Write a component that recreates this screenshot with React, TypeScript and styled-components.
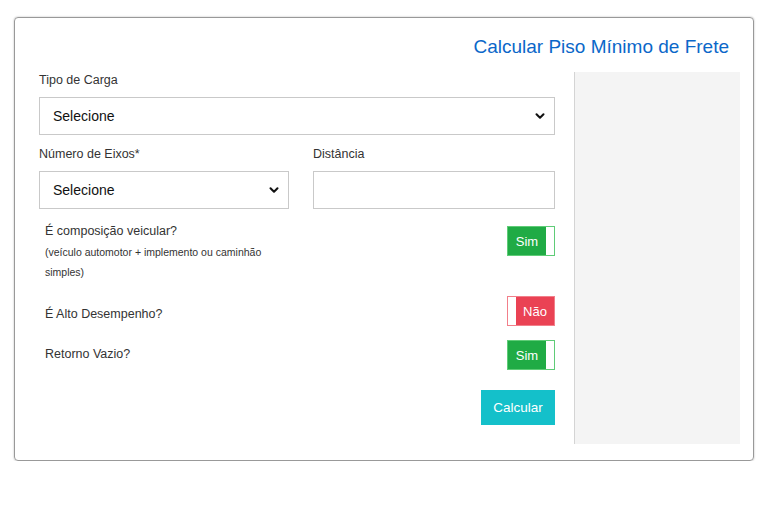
import React, { useState } from "react";
import styled, { createGlobalStyle } from "styled-components";
import { ChevronDown } from "lucide-react";

const GlobalStyle = createGlobalStyle`
  html, body {
    margin: 0;
    padding: 0;
    background: #ffffff;
    font-family: "Liberation Sans", Arial, sans-serif;
  }
  * {
    box-sizing: border-box;
  }
`;

const Page = styled.div`
  padding: 17px 15px 0 14px;
  width: 768px;
`;

const Card = styled.div`
  width: 740px;
  height: 444px;
  border: 1px solid #999;
  border-radius: 4px;
  box-shadow: 0 0 2px rgba(0, 0, 0, 0.3);
  padding: 17px 13px 16px 24px;
  display: flex;
  flex-direction: column;
`;

const Title = styled.h1`
  margin: 0 11px 13px 0;
  font-size: 19px;
  line-height: 24px;
  font-weight: 400;
  color: #0b67c9;
  text-align: right;
`;

const Body = styled.div`
  flex: 1;
  display: flex;
  gap: 19px;
`;

const Form = styled.div`
  width: 516px;
  display: flex;
  flex-direction: column;
`;

const SidePanel = styled.div`
  flex: 1;
  background: #f4f4f4;
  border-left: 1px solid #d4d4d4;
`;

const Field = styled.div`
  display: flex;
  flex-direction: column;
`;

const Label = styled.label`
  font-size: 12.5px;
  line-height: 16px;
  color: #333;
  margin-bottom: 9px;
`;

const FieldGrid = styled.div`
  display: grid;
  grid-template-columns: 250px 1fr;
  column-gap: 24px;
  margin-top: 11px;
`;

const SelectWrap = styled.div`
  position: relative;
  height: 38px;
`;

const Select = styled.select`
  appearance: none;
  width: 100%;
  height: 100%;
  border: 1px solid #c9c9c9;
  border-radius: 0;
  background: #fff;
  padding: 0 30px 0 13px;
  font-family: inherit;
  font-size: 14px;
  color: #111;
  outline: 0;
`;

const Chevron = styled.span`
  position: absolute;
  right: 8px;
  top: 50%;
  transform: translateY(-50%);
  display: flex;
  color: #111;
  pointer-events: none;
`;

const TextInput = styled.input`
  height: 38px;
  width: 100%;
  border: 1px solid #c9c9c9;
  border-radius: 0;
  padding: 0 12px;
  font-family: inherit;
  font-size: 14px;
  outline: 0;
`;

const Options = styled.div`
  display: flex;
  flex-direction: column;
  gap: 14px;
  margin-top: 11px;
`;

const OptionRow = styled.div`
  display: flex;
  justify-content: space-between;
  align-items: flex-start;
  padding-left: 6px;
`;

const OptionText = styled.div<{ $top?: number }>`
  font-size: 12.5px;
  line-height: 22px;
  color: #333;
  margin-top: ${(p) => p.$top ?? 0}px;
`;

const OptionHint = styled.div`
  font-size: 10.5px;
  line-height: 20px;
  color: #333;
  width: 240px;
`;

const Toggle = styled.button<{ $on: boolean; $top?: number }>`
  width: 48px;
  height: 30px;
  margin-top: ${(p) => p.$top ?? 0}px;
  padding: 0;
  display: flex;
  flex-direction: ${(p) => (p.$on ? "row" : "row-reverse")};
  align-items: stretch;
  border: 1px solid ${(p) => (p.$on ? "#5fcc77" : "#f27f8a")};
  background: ${(p) => (p.$on ? "#20ab45" : "#ea4254")};
  cursor: pointer;
  font-family: inherit;
`;

const ToggleLabel = styled.span`
  flex: 1;
  display: flex;
  align-items: center;
  justify-content: center;
  color: #fff;
  font-size: 13px;
`;

const Knob = styled.span`
  width: 8px;
  background: #fff;
`;

const Actions = styled.div`
  display: flex;
  justify-content: flex-end;
  margin-top: 20px;
`;

const Button = styled.button`
  width: 74px;
  height: 35px;
  border: 0;
  background: #14c0ca;
  color: #fff;
  font-family: inherit;
  font-size: 13.5px;
  cursor: pointer;
`;

function Switch({ on, onToggle, top }: { on: boolean; onToggle: () => void; top?: number }) {
  return (
    <Toggle type="button" $on={on} $top={top} onClick={onToggle}>
      <ToggleLabel>{on ? "Sim" : "Não"}</ToggleLabel>
      <Knob />
    </Toggle>
  );
}

function Dropdown() {
  return (
    <SelectWrap>
      <Select defaultValue="">
        <option value="">Selecione</option>
      </Select>
      <Chevron>
        <ChevronDown size={14} strokeWidth={3.5} />
      </Chevron>
    </SelectWrap>
  );
}

export default function App() {
  const [composicao, setComposicao] = useState(true);
  const [alto, setAlto] = useState(false);
  const [retorno, setRetorno] = useState(true);

  return (
    <Page>
      <GlobalStyle />
      <Card>
        <Title>Calcular Piso Mínimo de Frete</Title>
        <Body>
          <Form>
            <Field>
              <Label>Tipo de Carga</Label>
              <Dropdown />
            </Field>
            <FieldGrid>
              <Field>
                <Label>Número de Eixos*</Label>
                <Dropdown />
              </Field>
              <Field>
                <Label>Distância</Label>
                <TextInput type="text" />
              </Field>
            </FieldGrid>
            <Options>
              <OptionRow>
                <div>
                  <OptionText>É composição veicular?</OptionText>
                  <OptionHint>(veículo automotor + implemento ou caminhão simples)</OptionHint>
                </div>
                <Switch on={composicao} top={6} onToggle={() => setComposicao(!composicao)} />
              </OptionRow>
              <OptionRow>
                <OptionText $top={7}>É Alto Desempenho?</OptionText>
                <Switch on={alto} onToggle={() => setAlto(!alto)} />
              </OptionRow>
              <OptionRow>
                <OptionText $top={3}>Retorno Vazio?</OptionText>
                <Switch on={retorno} onToggle={() => setRetorno(!retorno)} />
              </OptionRow>
            </Options>
            <Actions>
              <Button type="button">Calcular</Button>
            </Actions>
          </Form>
          <SidePanel />
        </Body>
      </Card>
    </Page>
  );
}
